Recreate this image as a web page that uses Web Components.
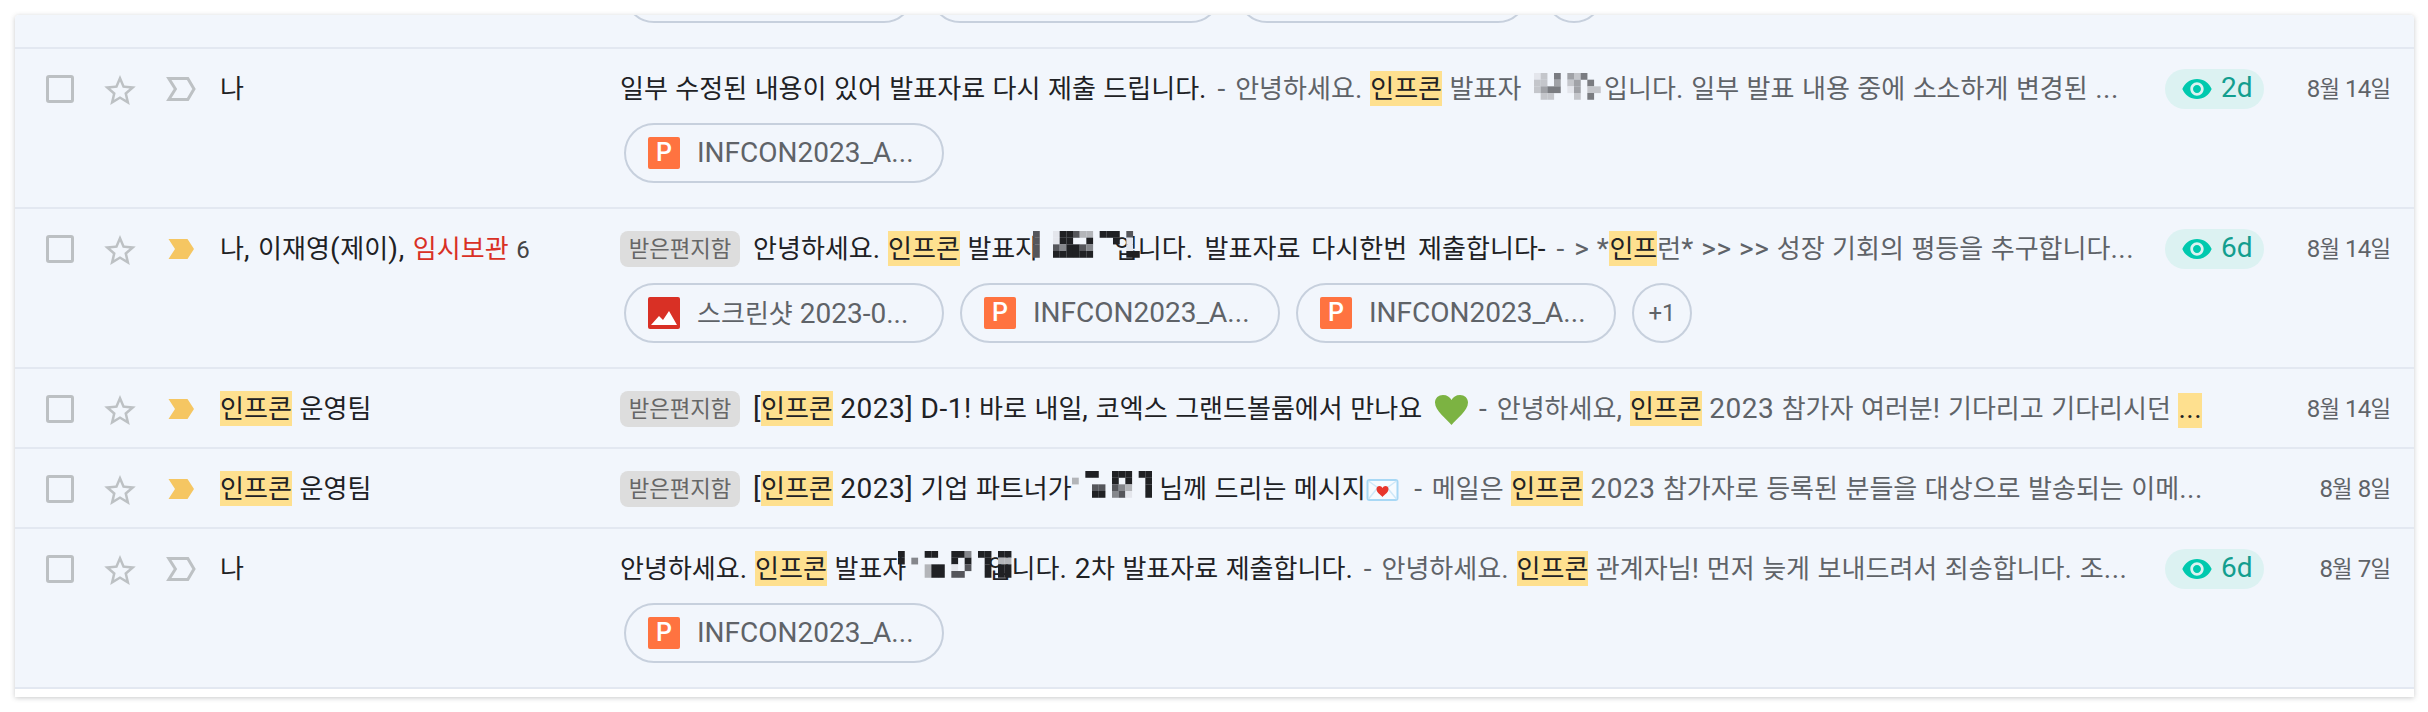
<!DOCTYPE html>
<html lang="ko">
<head>
<meta charset="utf-8">
<title>메일 검색 결과</title>
<style>
  html, body { margin: 0; background: #fff; }
  body { padding: 15px 14px 0 15px; height: 697px; overflow: hidden; font-family: Roboto, "Noto Sans CJK KR", sans-serif; }
</style>
</head>
<body>
<mail-list></mail-list>

<script>
// hangul in the reference is smaller than the latin beside it, so runs get their own size
const kr = (html) => html.replace(/[가-힣]+/g, (m) => `<span class="k">${m}</span>`);
const KR_CSS = `.k { font-family: "Noto Sans CJK KR", sans-serif; font-size: .93em; letter-spacing: 0; }`;

class FileChip extends HTMLElement {
  connectedCallback() {
    const kind = this.getAttribute('kind') || 'ppt';
    const name = this.getAttribute('name') || '';
    const icon = kind === 'img'
      ? `<svg class="ic" viewBox="0 0 32 32"><rect width="32" height="32" rx="2" fill="#d93025"/><path d="M3 28 L11 19 L15 23 L21 14 L29 28 Z" fill="#fff"/></svg>`
      : `<span class="ic p">P</span>`;
    this.attachShadow({ mode: 'open' }).innerHTML = `
      <style>
        :host {
          display: inline-flex; align-items: center; flex: none;
          box-sizing: border-box; width: var(--chip-w, 320px); height: 60px;
          padding-left: 22px; gap: 17px;
          border: 2px solid #c7d0dd; border-radius: 30px;
          color: #5f6368; font: 28px/32px Roboto, "Noto Sans CJK KR", sans-serif; white-space: nowrap;
        }
        .ic { width: 32px; height: 32px; flex: none; display: block; }
        .p {
          background: #ff7340; border-radius: 2px; color: #fff; text-align: center;
          font: 500 25px/32px Roboto, sans-serif;
        }
        ${KR_CSS}
      </style>
      ${name ? `${icon}<span>${kr(name)}</span>` : ''}`;
  }
}

class MoreChip extends HTMLElement {
  constructor() {
    super();
    this.attachShadow({ mode: 'open' }).innerHTML = `
      <style>
        :host {
          display: inline-flex; align-items: center; justify-content: center; flex: none;
          box-sizing: border-box; width: 60px; height: 60px;
          border: 2px solid #c7d0dd; border-radius: 50%;
          color: #5f6368; font: 24px Roboto, sans-serif;
        }
      </style><slot></slot>`;
  }
}

// pixelated censor block over a name
const SHADE = { a: '#e4e6ec', b: '#b3b5b9', c: '#85878c', d: '#55565b', e: '#202124' };
const SOFT = { a: '#e4e6ec', b: '#c4c6cb', c: '#a0a2a7', d: '#7a7c81' };
const BLOTS = {
  row1: { pal: SOFT, cells: ['ab.d.cbd..', 'bb.c.bc.d.', 'bcdd.ac.bb', '.bb...b.d.'] },
  row2: { pal: SHADE, cells: ['d..aeedbb.eee.d.', 'd..aee..e...e.a.', 'd..dceedc.....a.', 'd..eeeeee.....ee'] },
  row4: { pal: SHADE, cells: ['..ee..eee.ee', 'b.....e.e..e', '...dd.dcb..e', '...ee.cda..e'] },
  row5: { pal: SHADE, cells: ['e...ee..eec.ee.ee', 'e.c.....e.e..e.bb', '....bee.a.d..e.ee', '....bee.dd...e.ee'] }
};

class PixBlot extends HTMLElement {
  connectedCallback() {
    const blot = BLOTS[this.getAttribute('name')];
    const cell = 20 / 3;
    let rects = '';
    blot.cells.forEach((line, y) => {
      [...line].forEach((ch, x) => {
        if (blot.pal[ch]) rects += `<rect x="${x * cell}" y="${y * cell}" width="${cell + .1}" height="${cell + .1}" fill="${blot.pal[ch]}"/>`;
      });
    });
    const w = blot.cells[0].length * cell;
    this.attachShadow({ mode: 'open' }).innerHTML = `
      <style>
        :host { display: inline-block; position: relative; width: ${w}px; height: 27px; vertical-align: 0; }
        svg { display: block; }
      </style>
      <svg width="${w}" height="27" viewBox="0 0 ${w} 27">${rects}</svg>`;
  }
}

class MailRow extends HTMLElement {
  connectedCallback() {
    const seen = this.getAttribute('seen');
    const date = this.getAttribute('date') || '';
    const important = this.hasAttribute('important');
    const label = important
      ? `<path d="M2.5 2H21.5L28 12L21.5 22H2.5L9 12Z" fill="#f5c662"/>`
      : `<path d="M2.8 1.5H21.8L28 12L21.8 22.5H2.8L9.4 12Z" fill="none" stroke="#bdc1c4" stroke-width="3"/>`;
    const pill = seen ? `
      <span class="pill">
        <svg viewBox="0 0 24 24" width="32" height="32"><path fill="#00c9ae" d="M12 4.5C7 4.5 2.73 7.61 1 12c1.73 4.39 6 7.5 11 7.5s9.27-3.11 11-7.5c-1.73-4.39-6-7.5-11-7.5zM12 17c-2.76 0-5-2.24-5-5s2.24-5 5-5 5 2.24 5 5-2.24 5-5 5zm0-8c-1.66 0-3 1.34-3 3s1.34 3 3 3 3-1.34 3-3-1.34-3-3-3z"/></svg>
        <span class="age">${seen}</span>
      </span>` : '';
    this.attachShadow({ mode: 'open' }).innerHTML = `
      <style>
        :host {
          display: grid; grid-template-columns: 58px 62px 54px 400px 1fr;
          box-sizing: border-box; padding: 20px 23px 18px 31px;
          background: #f2f6fc; border-bottom: 2px solid #e3e8f1;
          color: #202124; font: 28px/36px Roboto, "Noto Sans CJK KR", sans-serif;
        }
        .check { width: 28px; height: 28px; box-sizing: border-box; margin-top: 6px; border: 3px solid #bcc0c3; border-radius: 3px; }
        .star { width: 32px; height: 30px; margin-top: 6px; display: block; fill: #bdc1c4; }
        .label { width: 30px; height: 24px; margin-top: 8px; display: block; }
        .sender { height: 40px; white-space: nowrap; overflow: hidden; letter-spacing: .8px; }
        .main { min-width: 0; }
        .line { display: flex; height: 40px; }
        .subject { flex: 1; min-width: 0; height: 40px; white-space: nowrap; overflow: hidden; letter-spacing: .5px; }
        .pill {
          flex: none; box-sizing: border-box; width: 99px; height: 40px; padding-left: 16px;
          display: flex; align-items: center; gap: 8px;
          background: #dcf2f2; border-radius: 20px; color: #129e8f; font-size: 28px;
        }
        .age { margin-top: -3px; }
        .date { flex: none; width: 127px; text-align: right; color: #5f6368; font-size: 24px; line-height: 37px; letter-spacing: -.8px; }
        .chips { display: flex; gap: 16px; margin: 14px 0 6px 4px; }
        .chips:not(.on) { display: none; }
        ${KR_CSS}
      </style>
      <span class="check"></span>
      <svg class="star" viewBox="2 2 20 19"><path d="M22 9.24l-7.19-.62L12 2 9.19 8.63 2 9.24l5.46 4.73L5.82 21 12 17.27 18.18 21l-1.63-7.03L22 9.24zM12 15.4l-3.76 2.27 1-4.28-3.32-2.88 4.38-.38L12 6.1l1.71 4.04 4.38.38-3.32 2.88 1 4.28L12 15.4z"/></svg>
      <svg class="label" viewBox="0 0 30 24">${label}</svg>
      <div class="sender"><slot name="sender"></slot></div>
      <div class="main">
        <div class="line">
          <div class="subject"><slot name="subject"></slot></div>
          ${pill}
          <span class="date">${kr(date)}</span>
        </div>
        <div class="chips ${this.querySelector('[slot=chips]') ? 'on' : ''}"><slot name="chips"></slot></div>
      </div>`;
  }
}

class MailList extends HTMLElement {
  connectedCallback() {
    const ppt = `<file-chip name="INFCON2023_A..."></file-chip>`;
    const tag = `<span class="tag">받은편지함</span>`;
    const dash = `<span class="dash">-</span>`;
    const heart = `<svg class="emoji" style="vertical-align:-7px;margin-left:4px" width="35" height="30" viewBox="0 0 35 30"><path fill="#7cb342" d="M17.5 30C13 24 1 16 1 7.5 1 3 4.5 0 9 0c4 0 7 2 8.5 5C19 2 22 0 26 0c4.5 0 8 3 8 7.5C34 16 22 24 17.5 30z"/></svg>`;
    const letter = `<svg class="emoji" style="vertical-align:-3px;margin-right:5px" width="33" height="22" viewBox="0 0 32 22"><rect x="1" y="1" width="30" height="20" rx="2" fill="#f6fbff" stroke="#a8d8f5" stroke-width="2"/><path d="M2 2L16 12L30 2M2 20L11 9M30 20L21 9" fill="none" stroke="#cfe8f8" stroke-width="1.5"/><path fill="#e8362c" d="M16 18c-2-2.5-6-4.5-6-8 0-1.8 1.3-3 3-3 1.3 0 2.4.7 3 2 .6-1.3 1.7-2 3-2 1.7 0 3 1.2 3 3 0 3.5-4 5.5-6 8z"/></svg>`;
    const rows = [
      // scrolled almost out of view: only the bottoms of its chips show
      { important: true, date: '', sender: '', subject: '',
        chips: `<file-chip style="--chip-w:290px"></file-chip><file-chip style="--chip-w:291px"></file-chip><file-chip style="--chip-w:291px"></file-chip><more-chip></more-chip>` },
      { seen: '2d', date: '8월 14일', sender: '나',
        subject: `일부 수정된 내용이 있어 발표자료 다시 제출 드립니다. <span class="snip">${dash} 안녕하세요. <mark>인프콘</mark> 발표자<pix-blot name="row1" style="margin:0 3px 0 13px;vertical-align:-2px"></pix-blot>입니다. 일부 발표 내용 중에 소소하게 변경된 ...</span>`,
        chips: ppt },
      { seen: '6d', date: '8월 14일', important: true,
        sender: `나, 이재영(제이), <span class="draft">임시보관</span> <span class="count">6</span>`,
        subject: `${tag}안녕하세요. <mark>인프콘</mark> 발표자<pix-blot name="row2" style="margin:0 -26px 0 -6px"></pix-blot><span style="word-spacing:3.5px">입니다. 발표자료 다시한번 제출합니다-</span> <span class="snip">${dash} &gt; *<mark>인프</mark>런* &gt;&gt; &gt;&gt; 성장 기회의 평등을 추구합니다...</span>`,
        chips: `<file-chip kind="img" name="스크린샷 2023-0..."></file-chip>${ppt}${ppt}<more-chip>+1</more-chip>` },
      { date: '8월 14일', important: true, sender: `<mark>인프콘</mark> 운영팀`,
        subject: `${tag}[<mark>인프콘</mark> 2023] D-1! 바로 내일, 코엑스 그랜드볼룸에서 만나요 ${heart} <span class="snip">${dash} 안녕하세요, <mark>인프콘</mark> 2023 참가자 여러분! 기다리고 기다리시던 <mark>...</mark></span>` },
      { date: '8월 8일', important: true, sender: `<mark>인프콘</mark> 운영팀`,
        subject: `${tag}[<mark>인프콘</mark> 2023] 기업 파트너가<pix-blot name="row4"></pix-blot> 님께 드리는 메시지${letter} <span class="snip">${dash} 메일은 <mark>인프콘</mark> 2023 참가자로 등록된 분들을 대상으로 발송되는 이메...</span>` },
      { seen: '6d', date: '8월 7일', sender: '나',
        subject: `안녕하세요. <mark>인프콘</mark> 발표자<pix-blot name="row5" style="margin:0 -24px 0 -8px"></pix-blot>입니다. 2차 발표자료 제출합니다. <span class="snip">${dash} 안녕하세요. <mark>인프콘</mark> 관계자님! 먼저 늦게 보내드려서 죄송합니다. 조...</span>`,
        chips: ppt }
    ];
    const html = rows.map((r) => `
      <mail-row date="${r.date}" ${r.seen ? `seen="${r.seen}"` : ''} ${r.important ? 'important' : ''}>
        <span slot="sender">${kr(r.sender)}</span>
        <span slot="subject">${kr(r.subject)}</span>
        ${r.chips ? `<div slot="chips" style="display:contents">${r.chips}</div>` : ''}
      </mail-row>`).join('');
    this.attachShadow({ mode: 'open' }).innerHTML = `
      <style>
        :host {
          display: block; height: 682px; overflow: hidden; background: #fff;
          border-radius: 4px 4px 0 0; box-shadow: 0 1px 5px rgba(60,64,67,.28);
        }
        .scroll { margin-top: -126px; }
        mark {
          display: inline-block; height: 35px; line-height: 31px;
          background: #fee08f; color: #202124;
        }
        .snip { color: #5f6368; }
        .snip mark { color: #202124; }
        .dash { margin: 0 2px 0 3px; }
        .tag {
          display: inline-block; box-sizing: border-box; width: 120px; height: 36px; margin-right: 13px;
          background: #dddddd; border-radius: 8px; color: #666; text-align: center;
          font-size: 24px; line-height: 33px; vertical-align: 1px;
        }
        .draft { color: #d93025; }
        .count { color: #444; font-size: 24px; }
        ${KR_CSS}
      </style>
      <div class="scroll">${html}</div>`;
  }
}

customElements.define('file-chip', FileChip);
customElements.define('more-chip', MoreChip);
customElements.define('pix-blot', PixBlot);
customElements.define('mail-row', MailRow);
customElements.define('mail-list', MailList);
</script>
</body>
</html>
